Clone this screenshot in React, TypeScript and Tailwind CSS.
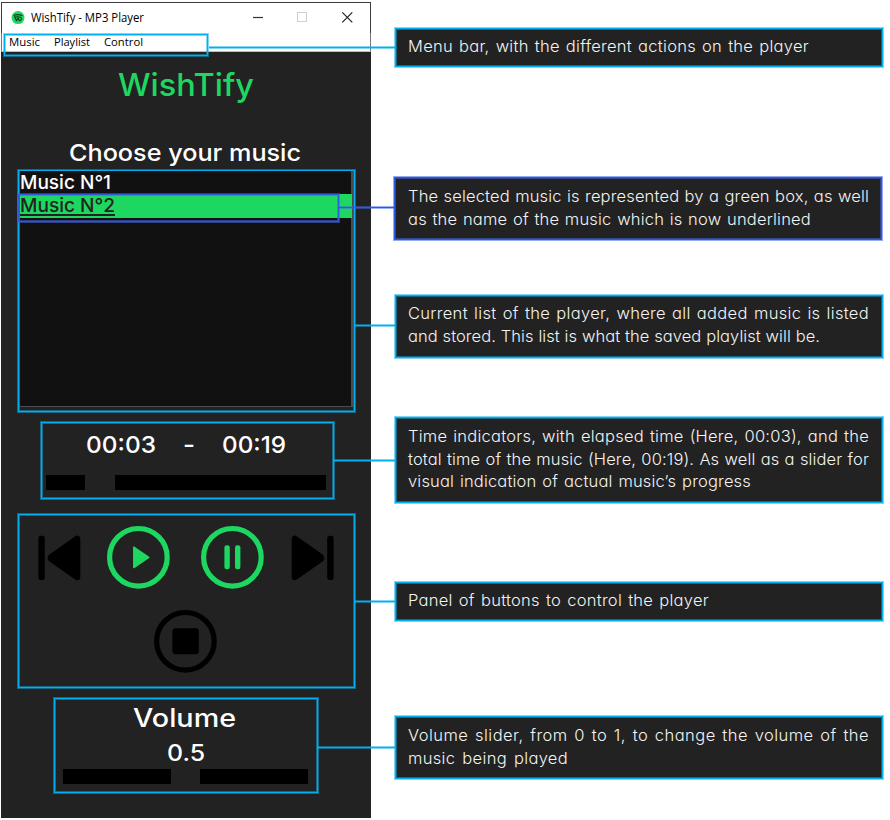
import { useLayoutEffect, useRef, type ReactNode } from "react";

const MONT = "font-['Inter',sans-serif] font-[460]";

/** One line of text fitted to an exact width, by stretching it or by opening its word and letter gaps. */
function Fit({
  text,
  width,
  by = "stretch",
  className = "",
}: {
  text: string;
  width: number;
  by?: "stretch" | "words";
  className?: string;
}) {
  const ref = useRef<HTMLSpanElement>(null);
  useLayoutEffect(() => {
    const apply = () => {
      const el = ref.current;
      if (!el) return;
      el.style.transform = "none";
      el.style.wordSpacing = "0px";
      el.style.letterSpacing = "0px";
      const natural = el.getBoundingClientRect().width;
      const gaps = text.split(" ").length - 1;
      if (by === "words" && gaps > 0) {
        const spare = width - natural;
        el.style.letterSpacing = `${(spare * 0.6) / text.length}px`;
        el.style.wordSpacing = `${(spare * 0.4) / gaps}px`;
      } else {
        el.style.transform = `scaleX(${width / natural})`;
      }
    };
    apply();
    document.fonts?.ready.then(apply);
  }, [text, width, by]);
  return (
    <span className="block" style={{ width }}>
      <span ref={ref} className={`inline-block origin-left whitespace-pre ${className}`}>
        {text}
      </span>
    </span>
  );
}

const FRAME =
  "border border-[#00b0f0] shadow-[0_0_0_1px_rgba(0,176,240,0.5),inset_0_0_0_1px_rgba(0,176,240,0.5)]";
const BLUE_FRAME =
  "border border-[#3058e0] shadow-[0_0_0_1px_rgba(60,100,235,0.55),inset_0_0_0_1px_rgba(60,100,235,0.55)]";

function Callout({
  lines,
  className,
  wire,
  blue = false,
}: {
  lines: [string, number][];
  className: string;
  wire: string;
  blue?: boolean;
}) {
  return (
    <div
      className={`relative flex flex-col bg-[#222222] pl-3 font-['Inter',sans-serif] text-[16.5px] font-light leading-[22.7px] text-[#f4f4f4] [font-feature-settings:'cv11'] ${
        blue ? BLUE_FRAME : FRAME
      } ${className}`}
    >
      <div
        className={`absolute right-full h-px ${
          blue
            ? "bg-[#3058e0] shadow-[0_1px_0_rgba(60,100,235,0.5),0_-1px_0_rgba(60,100,235,0.5)]"
            : "bg-[#00b0f0] shadow-[0_1px_0_rgba(0,176,240,0.5),0_-1px_0_rgba(0,176,240,0.5)]"
        } ${wire}`}
      />
      {lines.map(([t, w]) => (
        <Fit key={t} text={t} width={w} by="words" />
      ))}
    </div>
  );
}

function Ring({ color, children }: { color: string; children: ReactNode }) {
  return (
    <svg width="64" height="64" viewBox="0 0 64 64" className={`block shrink-0 ${color}`}>
      <g transform="translate(0.4 0.3)">
        <circle cx="32" cy="32" r="28.8" fill="none" stroke="currentColor" strokeWidth="5.2" />
        {children}
      </g>
    </svg>
  );
}

function Skip({ flip = false }: { flip?: boolean }) {
  return (
    <svg
      width="43"
      height="46"
      viewBox="0 0 43 46"
      className={`mt-[10px] block shrink-0 ${flip ? "-scale-x-100" : ""}`}
    >
      <rect x="0.4" y="0.7" width="6.4" height="44.4" rx="2.4" />
      <path d="M37.2 1.2C39.5 -0.2 42.3 1 42.3 4V42C42.3 45 39.5 46 37.2 44.6L11.5 26.5C9 24.5 9 21.5 11.5 19.4Z" />
    </svg>
  );
}

function Player() {
  return (
    <div className="relative ml-px mt-[2px] flex h-[816px] w-[370px] shrink-0 flex-col bg-[#222222]">
      <div className="flex h-[31px] shrink-0 items-center border-x border-t border-[#3c3c40] bg-white pl-[9px] font-['Open_Sans',sans-serif] text-black">
        <svg width="14" height="14" viewBox="0 0 14 14" className="block">
          <circle cx="7" cy="6.6" r="6.5" fill="#1ed760" />
          <path
            d="M3 4.3C5.5 3.4 8.6 3.5 11 4.6M3.6 5.6L5.5 9.8L7 6.9L8.4 9.8C10.4 10 11.2 7 9.5 6.3C8 5.7 6.4 5.6 4.8 6"
            fill="none"
            stroke="#10351d"
            strokeWidth="1.1"
            strokeLinecap="round"
            strokeLinejoin="round"
          />
        </svg>
        <div className="ml-[6px] text-[12px] leading-4">
          <Fit text="WishTify - MP3 Player" width={113} />
        </div>
        <svg width="106" height="14" viewBox="0 0 106 14" className="ml-[107px] block" fill="none">
          <path d="M2 6.5H12" stroke="#333" strokeWidth="1.2" />
          <rect x="46.5" y="1.5" width="9" height="9" stroke="#cfcfcf" />
          <path d="M91.3 1.3L101.3 11.3M101.3 1.3L91.3 11.3" stroke="#222" strokeWidth="1.2" />
        </svg>
      </div>
      <div className="flex h-[19px] shrink-0 gap-[14px] border-x border-b border-[#77777a] border-b-[#bdbdbd] bg-white pl-[7px] pt-px font-['Open_Sans',sans-serif] text-[11.5px] leading-4 text-black">
        <Fit text="Music" width={31} />
        <Fit text="Playlist" width={36} />
        <Fit text="Control" width={39} />
      </div>
      <div className={`absolute left-[3px] top-[32px] h-[22px] w-[204px] ${FRAME}`} />

      <h1 className={`ml-[117px] mt-[12px] h-[42px] text-[31px] leading-[42px] text-[#1ed760] ${MONT}`}>
        <Fit text="WishTify" width={136} />
      </h1>
      <h2 className={`ml-[68px] mt-[30px] h-[32px] text-[23.5px] leading-[34px] text-white ${MONT}`}>
        <Fit text="Choose your music" width={232} />
      </h2>

      <div className={`relative ml-[17px] mt-[2px] h-[242px] w-[337px] ${FRAME}`}>
        <div className="ml-px h-[236px] w-[333px] border-b border-r-2 border-[#4c4c4c] bg-[#111111] text-[18.5px]">
          <div className={`h-[23px] leading-[23px] text-white ${MONT}`}>
            <Fit text="Music N°1" width={91} />
          </div>
          <div className={`h-6 w-[332px] bg-[#1ed760] leading-[23px] text-[#222] ${MONT}`}>
            <Fit
              text="Music N°2"
              width={95}
              className="underline decoration-2 underline-offset-[2px] [text-decoration-skip-ink:none]"
            />
          </div>
        </div>
        <div className={`absolute -left-px top-[23px] h-7 w-[321px] ${BLUE_FRAME}`} />
      </div>

      <div className={`ml-[40px] mt-[10px] h-[77px] w-[293px] ${FRAME}`}>
        <div className={`flex h-[42px] pl-[44px] text-[23.5px] leading-[43px] text-white ${MONT}`}>
          <Fit text="00:03" width={70} />
          <span className="ml-[27px]">
            <Fit text="-" width={12} />
          </span>
          <span className="ml-[27px]">
            <Fit text="00:19" width={64} />
          </span>
        </div>
        <div className="ml-1 mt-[10px] flex h-[15px] gap-[30px]">
          <div className="w-[39px] bg-black" />
          <div className="w-[211px] bg-black" />
        </div>
      </div>

      <div className={`ml-[17px] mt-[15px] h-[174px] w-[337px] ${FRAME}`}>
        <div className="mt-[10px] flex pl-[19px]">
          <Skip />
          <div className="ml-[25px]">
            <Ring color="text-[#1ed760]">
              <path
                d="M27.4 21.8V42.3L42.4 32Z"
                fill="currentColor"
                stroke="currentColor"
                strokeWidth="1.5"
                strokeLinejoin="round"
              />
            </Ring>
          </div>
          <div className="ml-[30px]">
            <Ring color="text-[#1ed760]">
              <rect x="24" y="20" width="5.4" height="24" rx="2.3" fill="currentColor" />
              <rect x="34.6" y="20" width="5.4" height="24" rx="2.3" fill="currentColor" />
            </Ring>
          </div>
          <div className="ml-[27px]">
            <Skip flip />
          </div>
        </div>
        <div className="ml-[134px] mt-5">
          <Ring color="text-black">
            <rect x="19" y="19" width="26.4" height="26" rx="3" fill="currentColor" />
          </Ring>
        </div>
      </div>

      <div className={`ml-[53px] mt-[10px] h-[95px] w-[264px] text-white ${FRAME} ${MONT}`}>
        <div className="pl-[78px] text-[25px] leading-[38px]">
          <Fit text="Volume" width={103} />
        </div>
        <div className="pl-[112px] text-[23px] leading-[32px]">
          <Fit text="0.5" width={38} />
        </div>
        <div className="ml-2 flex h-[15px] gap-[29px]">
          <div className="w-[108px] bg-black" />
          <div className="w-[108px] bg-black" />
        </div>
      </div>
    </div>
  );
}

export default function App() {
  return (
    <div className="flex h-[820px] w-[890px] overflow-hidden bg-white">
      <Player />
      <div className="ml-6 flex w-[488px] flex-col">
        <Callout
          className="mt-[28px] h-[39px] pt-[6px]"
          wire="top-[18px] w-[187px]"
          lines={[["Menu bar, with the different actions on the player", 401]]}
        />
        <Callout
          blue
          className="-ml-px mr-px mt-[110px] h-[63px] pl-[13px] pt-[7px]"
          wire="top-[29px] w-[56px]"
          lines={[
            ["The selected music is represented by a green box, as well", 461],
            ["as the name of the music which is now underlined", 403],
          ]}
        />
        <Callout
          className="mt-[55px] h-[63px] pt-[6px]"
          wire="top-[29px] w-[41px]"
          lines={[
            ["Current list of the player, where all added music is listed", 461],
            ["and stored. This list is what the saved playlist will be.", 412],
          ]}
        />
        <Callout
          className="mt-[59px] h-[86px] pt-[7px]"
          wire="top-[42px] w-[62px]"
          lines={[
            ["Time indicators, with elapsed time (Here, 00:03), and the", 461],
            ["total time of the music (Here, 00:19). As well as a slider for", 461],
            ["visual indication of actual music’s progress", 343],
          ]}
        />
        <Callout
          className="mt-[79px] h-[39px] pt-[6px]"
          wire="top-[18px] w-[41px]"
          lines={[["Panel of buttons to control the player", 301]]}
        />
        <Callout
          className="mt-[95px] h-[63px] pt-[7px]"
          wire="top-[30px] w-[78px]"
          lines={[
            ["Volume slider, from 0 to 1, to change the volume of the", 461],
            ["music being played", 160],
          ]}
        />
      </div>
    </div>
  );
}
